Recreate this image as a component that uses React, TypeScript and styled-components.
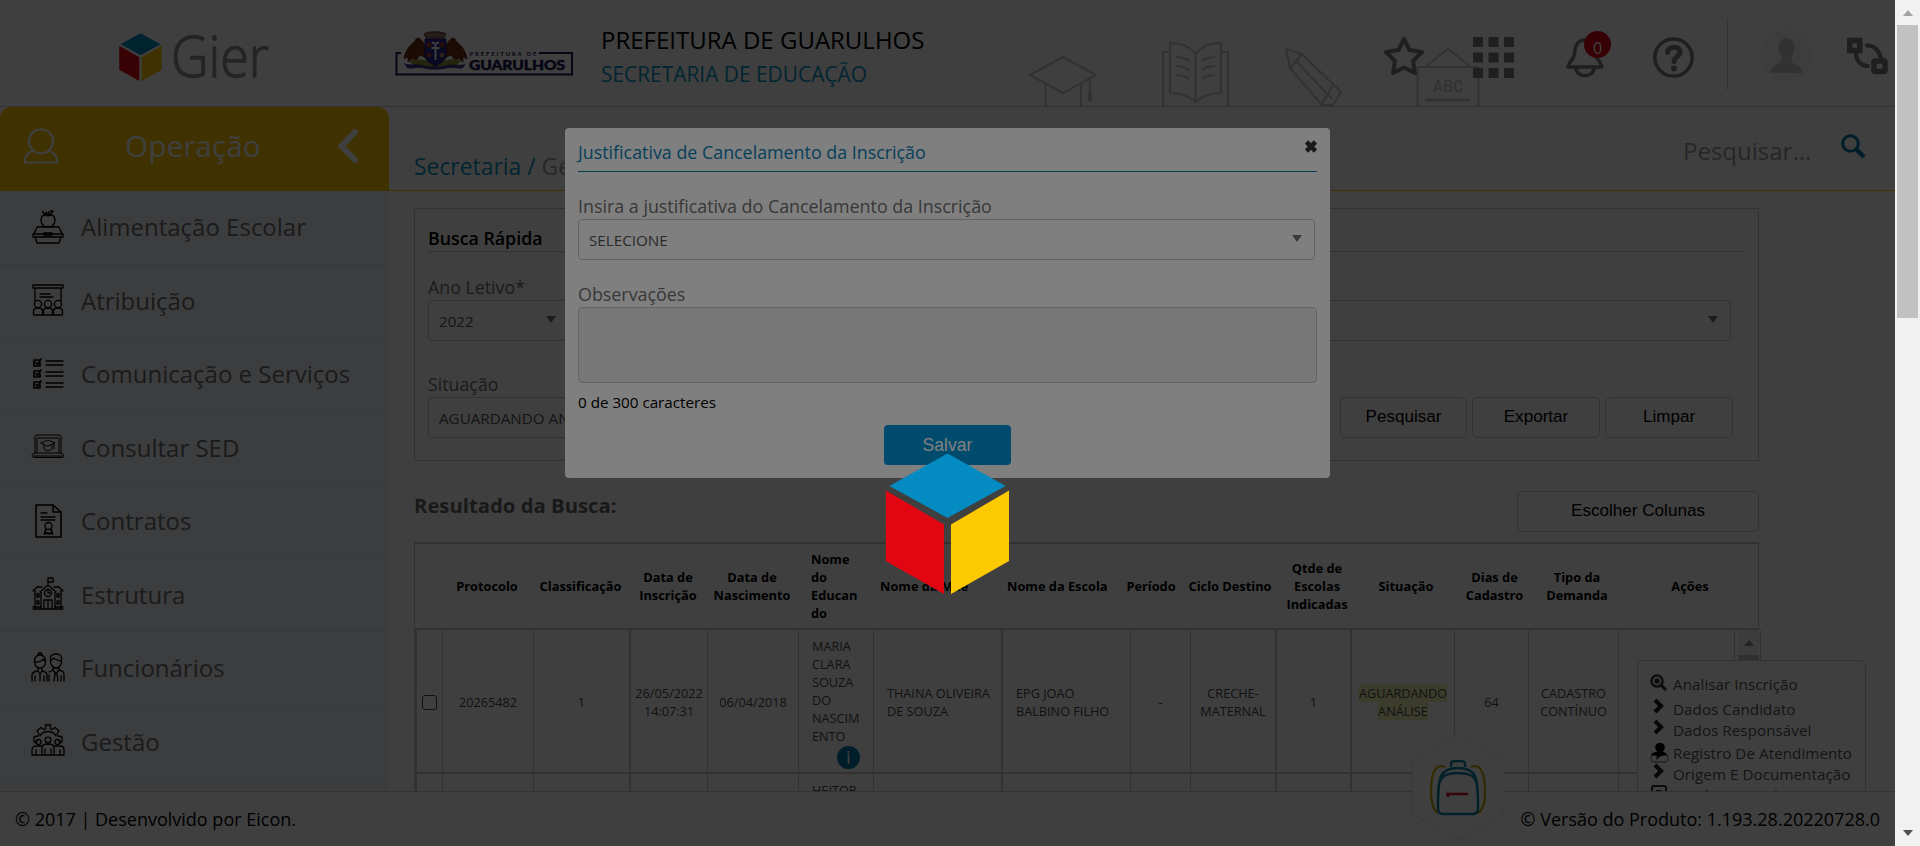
import React from 'react';
import styled, { createGlobalStyle, css } from 'styled-components';

const GlobalStyle = createGlobalStyle`
  * { box-sizing: border-box; }
  html, body { margin: 0; padding: 0; overflow: hidden; background: #fff; }
  body { font-family: "Open Sans", "Noto Sans", sans-serif; color: #000; }
  svg { display: block; flex: none; }
`;

const LINE = '#c8c8c8';
const BLUE = '#0a94c8';
const YELLOW = '#fdc900';

const Screen = styled.div`
  display: flex;
  width: 1920px;
  height: 846px;
  overflow: hidden;
`;

const Page = styled.div`
  position: relative;
  display: flex;
  flex-direction: column;
  width: 1895px;
  height: 846px;
  background: #fff;
`;

/* ---------- header ---------- */

const Header = styled.header`
  position: relative;
  display: flex;
  align-items: flex-start;
  height: 107px;
  padding: 0 7px 0 119px;
  border-bottom: 1px solid ${LINE};
`;

const Brand = styled.div`
  display: flex;
  margin-top: 20px;
  width: 276px;
  svg:first-child { margin-top: 13px; }
`;

const CityLogo = styled.div`
  margin-top: 29px;
  width: 206px;
`;

const Heading = styled.div`
  margin-top: 23px;
  line-height: 34px;
  white-space: nowrap;
`;

const CityName = styled.div`
  font-size: 24px;
`;

const Department = styled.div`
  font-size: 20.9px;
  color: ${BLUE};
`;

const Doodles = styled.svg`
  position: absolute;
  left: 1020px;
  bottom: 0;
`;

const Tools = styled.div`
  position: relative;
  display: flex;
  align-items: center;
  margin-left: auto;
  margin-top: 18px;
  height: 78px;
`;

const Tool = styled.div<{ $gap: number; $up?: number }>`
  position: relative;
  margin-left: ${(p) => p.$gap}px;
  padding-bottom: ${(p) => p.$up ?? 0}px;
`;

const Badge = styled.div`
  position: absolute;
  left: 18px;
  top: -6px;
  width: 27px;
  height: 27px;
  border-radius: 50%;
  background: #d80010;
  color: #fff;
  font-size: 16px;
  line-height: 34px;
  text-align: center;
`;

const Divider = styled.div`
  width: 1px;
  height: 72px;
  margin: 0 0 6px 33px;
  background: ${LINE};
`;

/* ---------- sub bar ---------- */

const SubBar = styled.div`
  display: flex;
  height: 84px;
`;

const ModuleTab = styled.div`
  display: flex;
  align-items: flex-start;
  width: 389px;
  padding: 21px 30px 0 23px;
  border-radius: 11px 11px 0 0;
  background: ${YELLOW};
`;

const ModuleName = styled.div`
  flex: 1;
  margin: 0 0 0 66px;
  font-size: 29.8px;
  line-height: 36px;
  color: #fff;
`;

const Crumbs = styled.div`
  display: flex;
  flex: 1;
  justify-content: space-between;
  padding: 26px 29px 0 25px;
  border-bottom: 1px solid ${YELLOW};
  font-size: 24px;
  line-height: 36px;
  white-space: nowrap;
`;

const Path = styled.div`
  margin-top: 16px;
  font-size: 22.9px;
  color: #a0a0a0;
  span { color: ${BLUE}; }
`;

const Search = styled.div`
  display: flex;
  width: 183px;
  justify-content: space-between;
  color: #999;
`;

/* ---------- main ---------- */

const Main = styled.div`
  display: flex;
  height: 600px;
  overflow: hidden;
`;

const Sidebar = styled.nav`
  width: 389px;
  background: #f2f5fa;
`;

const MenuItem = styled.div`
  display: flex;
  align-items: center;
  height: 73.5px;
  padding: 0 0 1px 31px;
  gap: 16px;
  border-bottom: 1px solid #e2e5ea;
  font-size: 24px;
  color: #6e6e6e;
  white-space: nowrap;
`;

const Content = styled.main`
  position: relative;
  flex: 1;
  padding: 17px 0 0 25px;
`;

const Panel = styled.section`
  width: 1345px;
  height: 253px;
  padding: 0 13px;
  border: 1px solid ${LINE};
`;

const PanelTitle = styled.h2`
  margin: 0 0 24px;
  height: 43px;
  padding-top: 17px;
  border-bottom: 1px solid ${LINE};
  font-size: 17.8px;
  font-weight: 600;
  line-height: 24px;
`;

const FieldRow = styled.div`
  display: flex;
  align-items: flex-end;
  margin-bottom: 32px;
  gap: 20px;
`;

const Field = styled.div<{ $w?: number }>`
  ${(p) => (p.$w ? css`width: ${p.$w}px;` : css`flex: 1; margin-right: 14px;`)}
`;

const Label = styled.label`
  display: block;
  padding-bottom: 2px;
  font-size: 17.8px;
  line-height: 22px;
  color: #707070;
`;

const SelectBox = styled.div`
  display: flex;
  align-items: center;
  justify-content: space-between;
  height: 41px;
  padding: 1px 12px 0 10px;
  border: 1px solid ${LINE};
  border-radius: 4px;
  background: #fff;
  font-size: 15.2px;
  color: #555;
  white-space: nowrap;
`;

const Arrow = styled.span`
  margin-top: -3px;
  border: 5px solid transparent;
  border-top: 7px solid #777;
  border-bottom: 0;
`;

const Button = styled.button<{ $w: number }>`
  width: ${(p) => p.$w}px;
  height: 41px;
  padding: 0 0 2px;
  border: 1px solid ${LINE};
  border-radius: 5px;
  background: #fff;
  color: #000;
  font-family: "Liberation Sans", sans-serif;
  font-size: 17.1px;
`;

const ButtonRow = styled.div`
  display: flex;
  gap: 5px;
  margin-left: auto;
  margin-right: 12px;
`;

const ResultBar = styled.div`
  display: flex;
  justify-content: space-between;
  width: 1345px;
  margin-top: 30px;
`;

const ResultTitle = styled.h2`
  margin: 0;
  font-size: 20.3px;
  line-height: 28px;
  color: #666;
`;

const TableHead = styled.div`
  display: grid;
  grid-template-columns: 27px 90px 97px 78px 90px 76px 128px 127px 46px 112px 62px 116px 61px 104px 122px;
  align-items: center;
  width: 1345px;
  height: 88px;
  margin-top: 10px;
  border: 1px solid ${LINE};
  border-width: 2px 1px;
  font-size: 12.8px;
  font-weight: 700;
  line-height: 18px;
`;

const HeadCell = styled.div<{ $pad?: number }>`
  display: flex;
  justify-content: ${(p) => (p.$pad ? 'flex-start' : 'center')};
  padding-left: ${(p) => p.$pad ?? 0}px;
  text-align: ${(p) => (p.$pad ? 'left' : 'center')};
  white-space: pre;
`;

const TableBody = styled.div`
  display: flex;
  width: 1347px;
  border: solid ${LINE};
  border-width: 0 1px 0 3px;
`;

const Rows = styled.div`
  width: 1318px;
`;

const Row = styled.div`
  display: grid;
  grid-template-columns: 26px 91px 97px 77px 91px 75px 129px 128px 60px 86px 75px 103px 74px 90px 116px;
  height: 144px;
  border-bottom: 2px solid ${LINE};
  font-size: 12.7px;
  line-height: 18px;
  color: #484848;
`;

const Cell = styled.div<{ $left?: boolean; $thick?: boolean }>`
  display: flex;
  align-items: center;
  justify-content: ${(p) => (p.$left ? 'flex-start' : 'center')};
  padding: 2px 0 0 ${(p) => (p.$left ? 13 : 0)}px;
  text-align: ${(p) => (p.$left ? 'left' : 'center')};
  border-right: ${(p) => (p.$thick ? 2 : 1)}px solid ${LINE};
  white-space: pre;
`;

const NameCell = styled(Cell)`
  flex-direction: column;
  align-items: flex-start;
  justify-content: flex-start;
  padding: 7px 0 0 13px;
`;

const Info = styled.span`
  width: 23px;
  height: 23px;
  margin: 1px 0 0 25px;
  border-radius: 50%;
  background: #0078a4;
  color: #fff;
  font-size: 19px;
  line-height: 22px;
  text-align: center;
`;

const Check = styled.span`
  width: 15px;
  height: 15px;
  border: 1px solid #444;
  border-radius: 3px;
`;

const Mark = styled.span`
  background: #f2f2b4;
`;

const MarkLines = styled.div`
  display: flex;
  flex-direction: column;
  align-items: center;
`;

const InnerScroll = styled.div`
  display: flex;
  flex-direction: column;
  align-items: center;
  width: 21px;
  margin-left: 3px;
  background: #f3f3f3;
`;

const InnerThumb = styled.div`
  width: 21px;
  height: 100px;
  margin-top: 9px;
  background: #c1c1c1;
`;

const ActionMenu = styled.div`
  position: absolute;
  left: 1248px;
  top: 469px;
  width: 229px;
  height: 200px;
  padding: 13px 0 0 12px;
  border: 1px solid ${LINE};
  border-radius: 6px;
  background: #fff;
`;

const ActionItem = styled.div<{ $h: number }>`
  display: flex;
  height: ${(p) => p.$h}px;
  font-size: 15.2px;
  line-height: 21px;
  letter-spacing: 0.05px;
  color: #555;
  white-space: nowrap;
`;

const ActionIcon = styled.span`
  width: 23px;
`;

const Footer = styled.footer`
  display: flex;
  justify-content: space-between;
  align-items: center;
  height: 55px;
  padding: 0 15px 1px;
  border-top: 1px solid ${LINE};
  background: #fff;
  font-size: 18px;
`;

const Bag = styled.svg`
  position: absolute;
  left: 1411px;
  top: 733px;
`;

/* ---------- overlays ---------- */

const Shade = styled.div`
  position: absolute;
  inset: 0;
  background: rgba(0, 0, 0, 0.5);
`;

const Modal = styled.div`
  width: 765px;
  height: 350px;
  margin: 128px 0 0 565px;
  padding: 0 13px;
  border-radius: 4px;
  background: #fff;
`;

const ModalHead = styled.div`
  display: flex;
  justify-content: space-between;
  height: 44px;
  padding-top: 12px;
  margin-bottom: 22px;
  border-bottom: 1px solid #0078a8;
  font-size: 17.85px;
  line-height: 24px;
  color: #0a80b4;
`;

const ModalField = styled.div<{ $right?: number }>`
  padding-right: ${(p) => p.$right ?? 0}px;
  margin-bottom: 22px;
`;

const ModalLabel = styled(Label)`
  padding: 0 0 1px;
  line-height: 24px;
  font-size: 17.87px;
`;

const TextArea = styled.div`
  height: 76px;
  border: 1px solid ${LINE};
  border-radius: 4px;
  background: #f0f0f0;
`;

const Counter = styled.div`
  margin-top: 8px;
  font-size: 15.2px;
  line-height: 22px;
`;

const SaveButton = styled.button`
  display: block;
  width: 127px;
  height: 40px;
  margin: -10px auto 0;
  padding: 0;
  border: 0;
  border-radius: 4px;
  background: #0096dc;
  color: #fff;
  font-family: "Liberation Sans", sans-serif;
  font-size: 17.6px;
`;

const Loader = styled(Shade)`
  display: flex;
  justify-content: center;
  padding-top: 453px;
`;

/* ---------- page scrollbar ---------- */

const Scroll = styled.div`
  display: flex;
  flex-direction: column;
  align-items: center;
  width: 25px;
  background: #f1f1f1;
`;

const Thumb = styled.div`
  width: 21px;
  height: 293px;
  margin: 9px 0 auto;
  background: #c1c1c1;
`;

const Tri = styled.span<{ $down?: boolean; $c: string }>`
  margin: ${(p) => (p.$down ? '0 0 10px' : '10px 0 0')};
  border: 5.5px solid transparent;
  ${(p) =>
    p.$down
      ? css`border-top: 6px solid ${p.$c}; border-bottom: 0;`
      : css`border-bottom: 6px solid ${p.$c}; border-top: 0;`}
`;

/* ---------- drawings ---------- */

const ink = { fill: 'none', stroke: '#000', strokeWidth: 1.3, strokeLinejoin: 'round' as const, strokeLinecap: 'round' as const };
const Ico = ({ children }: { children: React.ReactNode }) => (
  <svg width="34" height="34" viewBox="0 0 34 34" {...ink}>{children}</svg>
);

const FoodIcon = () => (
  <Ico>
    <path d="M17 6c-3-2-7-1-7 4 0 4 3 7 5 7 1 0 1-.6 2-.6s1 .6 2 .6c2 0 5-3 5-7 0-5-4-6-7-4zM17 6c0-2-1-3-2-4M17 4c1-3 4-3.500 5-3-.5 2-3 3.500-5 3zM15 4c-2 0-3-1-3.500-2.500" />
    <path d="M6 17h22l3 7H3zM2 24h30v3H2zM4 27l2 6h22l2-6M13 27v-4h8v4M15 27v-2h4v2" />
  </Ico>
);
const BoardIcon = () => (
  <Ico>
    <path d="M2 2h30v3H2zM4 5v13M30 5v13M9 11h10M9 14h13" />
    {[7, 17, 27].map((x) => (
      <g key={x}>
        <circle cx={x} cy="21" r="3.600" />
        <path d={`M${x - 4.5} 32v-4c0-2 2-3 4.500-3s4.500 1 4.500 3v4z`} />
      </g>
    ))}
  </Ico>
);
const ListIcon = () => (
  <Ico>
    {[3, 14, 25].map((y) => (
      <g key={y}>
        <path strokeWidth="1.700" d={`M9 ${y}H3v6h6v-3M5 ${y + 2.5}l1.500 2L10 ${y - 1}`} />
        <path d={`M15 ${y + 1}h17M15 ${y + 5}h17`} />
      </g>
    ))}
  </Ico>
);
const LaptopIcon = () => (
  <Ico>
    <path strokeWidth="1" d="M4 23V7c0-1 .5-2 2-2h22c1.500 0 2 1 2 2v16M6 23V8h22v15M3 23h28l2 3c0 1-1 1.500-2 1.500H3c-1 0-2-.5-2-1.500zM2 26h30M10 13l7-3 7 3-7 3zM13 15v4c2 2 6 2 8 0v-4M23 14v5" />
  </Ico>
);
const ContractIcon = () => (
  <Ico>
    <path strokeWidth="1.600" d="M5 1h17l8 7v25H5zM22 1v7h8" />
    <path d="M10 9h6M10 13h14M10 16h14" />
    <circle cx="17.500" cy="22" r="3.500" />
    <path strokeWidth="1.600" d="M15 25l-1.500 5 2.500-1 1.500 1 1.500-1 2.500 1-1.500-5" />
  </Ico>
);
const SchoolIcon = () => (
  <Ico>
    <path d="M2 32h30M4 32V14M30 32V14M2 14l4-4h5M32 14l-4-4h-5M9 15l8-7 8 7M10 14v18M24 14v18M17 8V1h5v4h-5M13 32v-9h8v9M17 23v9" />
    <circle cx="17" cy="16" r="3.500" />
    <path d="M17 14v2h2M6 17h2v3H6zM26 17h2v3h-2zM6 24h2v3H6zM26 24h2v3h-2zM2 30h8M24 30h8" />
  </Ico>
);
const StaffIcon = () => (
  <Ico>
    <path d="M3.500 11c0-5 2-7 5.500-7s5.500 2 5.500 7c0 4-3 6-5.500 6S3.500 15 3.500 11zM4 11c4 0 7-1 8-3 1 2 2 2 2.500 3M7 4c0-3 4-3 4 0M7 17v3l2 3 2-3v-3M1 30v-6c0-2 2-3.500 6-4M11 20c3 .5 5 2 5 4v6M4 30v-5M13 30v-5M9 23v7" />
    <path d="M19.500 10c0 4 2.500 7 5.500 7s5.500-3 5.500-7M19.500 10V7c0-3 3-4 6-4s5 2 5 4v3c-3-1-6-1-8-3-1 2-2 2-3 3M22 17v2l3 4 3-4v-2M18 21l4-2M28 19c4 1 5 2 5 5v6M18 30v-6M30 30v-5M24 23l-1 7M26 23l1 7" />
  </Ico>
);
const ManageIcon = () => (
  <Ico>
    <path d="M6 18H3v-5l4-1 1-2-2-3 4-3.500 3 2 1.500-.5V1h5v4l1.500.5 3-2L28 7l-2 3 1 2 4 1v5h-3M9 12c3-6 13-6 16 0" />
    <circle cx="17" cy="16" r="2.800" />
    <circle cx="7.500" cy="18" r="2.500" />
    <circle cx="26.500" cy="18" r="2.500" />
    <path d="M11 31v-7c0-3 2-4 6-4s6 1 6 4v7zM14 31v-6M20 31v-6M11 22H5c-2 0-4 1-4 4v5h10M23 22h6c2 0 4 1 4 4v5H23M5 31v-5M29 31v-5" />
  </Ico>
);

const Cube = ({ w, h }: { w: number; h: number }) => (
  <svg width={w} height={h} viewBox="0 0 126 141" preserveAspectRatio="none">
    <path fill="#048cc2" d="M63 .5L121.500 33 63 65 4.500 33z" />
    <path fill="#e20613" d="M.8 37.500L59.500 71.500V141L.8 108z" />
    <path fill="#fdc900" d="M125 37.500L66.500 71.500V141l58.500-33z" />
  </svg>
);

const CityCrest = () => (
  <svg width="180" height="48" viewBox="0 0 180 48">
    <path d="M6 24H1.500v21.500H177V24h-33" fill="none" stroke="#1a1450" strokeWidth="2" />
    <path d="M29 5c4-3 18-3 22 0l-2 4H31z" fill="#8a7068" stroke="#703028" />
    <path d="M31 18C28 15 28 10 23 9c-3 0-2 3-5 5-5 4-8 9-9 16l4-2v5l5-4 2 4 5-7 6 3z" fill="#6e2c10" stroke="#401808" strokeWidth=".6" />
    <path d="M50 18c3-3 3-8 8-9 3 0 2 3 5 5 5 4 8 9 9 16l-4-2v5l-5-4-2 4-5-7-6 3z" fill="#6e2c10" stroke="#401808" strokeWidth=".6" />
    <path d="M14 32c8-4 14 0 26 0s18-4 26 0l-8 7H22z" fill="#96903c" />
    <path d="M30 10h21v16c0 6-6 8-10.500 11C36 34 30 32 30 26z" fill="#28248c" stroke="#181468" />
    <circle cx="34" cy="16" r="2.500" fill="#a03c28" />
    <circle cx="47" cy="16" r="2.500" fill="#a03c28" />
    <circle cx="34" cy="26" r="2.500" fill="#a03c28" />
    <circle cx="47" cy="26" r="2.500" fill="#b08068" />
    <path d="M40.500 14v17M36.500 19h8M37 13c2 2 5 2 7 0" stroke="#fff" strokeWidth="2" fill="none" />
    <path d="M9 34c6 3 12 0 18 2s20 2 26 0 14 2 18-2l-3 5c-6 2-10-2-16 0s-18 2-24 0-10 2-16 0z" fill="#383488" />
    <text x="74.500" y="27" fontSize="6" fill="#1a1450" textLength="67" fontFamily="Lato" fontWeight="700">PREFEITURA DE</text>
    <text x="74" y="40.500" fontSize="13.500" fill="#1a1450" stroke="#1a1450" strokeWidth=".5" textLength="96" lengthAdjust="spacingAndGlyphs" fontFamily="Lato" fontWeight="900">GUARULHOS</text>
  </svg>
);

const HeaderDoodles = () => (
  <Doodles width="470" height="66" viewBox="0 0 470 66" fill="none" stroke={LINE} strokeWidth="2.200" strokeLinejoin="round">
    <path d="M10 35L43 17l33 18-33 18zM25.500 44v22M61 44v22M70 39v22" />
    <path d="M69 53.500h2v7h-2z" />
    <path d="M150 48V3c14 0 21 5 25.500 11C180 8 187 3 201 3v50c-14 0-21 5-25.500 9C171 58 164 53 150 53V48M175.500 14v48M150 12h-7v54M201 12h7v54M156 17c5 0 9 1 13 4M156 26c5 0 9 1 13 4M156 35c5 0 9 1 13 4M195 17c-5 0-9 1-13 4M195 26c-5 0-9 1-13 4M195 35c-5 0-9 1-13 4" />
    <path d="M266 9l16 5 39 38-8 13h-11l-32-37zM270 28l12-14M277 22l35 37M302 64l11-19" />
    <path d="M397.500 66V27h61v39M406 26l22-17 22 17" />
    <path strokeWidth="3" d="M405 60h45" />
    <text x="413" y="51.500" fontSize="17" fontWeight="500" fill={LINE} stroke="none" textLength="30" lengthAdjust="spacingAndGlyphs" fontFamily="Roboto">ABC</text>
  </Doodles>
);

const GRAY = '#7c7c7c';

const StarIcon = () => (
  <svg width="42" height="40" viewBox="0 0 42 40" fill="none" stroke={GRAY} strokeWidth="4" strokeLinejoin="round">
    <path d="M21 3l5.500 11 12.500 2-9 9 2 12-11-5.500L10 37l2-12-9-9 12.500-2z" />
  </svg>
);
const GridIcon = () => (
  <svg width="41" height="41" viewBox="0 0 41 41" fill={GRAY}>
    {[0, 15.5, 31].map((y) => [0, 15.5, 31].map((x) => <rect key={`${x}-${y}`} x={x} y={y} width="10" height="10" />))}
  </svg>
);
const BellIcon = () => (
  <svg width="38" height="41" viewBox="0 0 38 41" fill="none" stroke={GRAY} strokeWidth="3.600" strokeLinejoin="round">
    <path d="M19 3C10 3 9 11 8.500 17 8 23 3 24 2 30h34c-1-6-6-7-6.500-13C29 11 28 3 19 3zM10 31c0 10 18 10 18 0" />
  </svg>
);
const HelpIcon = () => (
  <svg width="41" height="41" viewBox="0 0 41 41" fill="none" stroke={GRAY}>
    <circle cx="20.500" cy="20.500" r="18.600" strokeWidth="3.500" />
    <path strokeWidth="5" strokeLinecap="round" d="M14.500 15.500c0-7 13-7 12.500 0 0 4-6 4-6 9" />
    <circle cx="21" cy="31.500" r="1.500" strokeWidth="3" />
  </svg>
);
const AvatarIcon = () => (
  <svg width="53" height="53" viewBox="0 0 53 53">
    <circle cx="26.500" cy="26.500" r="26" fill="#f6f6f6" />
    <path fill="#c8c8c8" d="M26.500 9c5 0 8 4 8 9s-2 8-3 10v4c2 4 10 4 11 12h-32c1-8 9-8 11-12v-4c-1-2-3-5-3-10s3-9 8-9z" />
  </svg>
);
const SwapIcon = () => (
  <svg width="41" height="38" viewBox="0 0 41 38" fill="none" stroke={GRAY} strokeWidth="5.500">
    <rect x="2.800" y="3.500" width="10" height="10" />
    <rect x="27" y="24" width="11" height="10.500" rx="1" />
    <path strokeWidth="4.200" strokeLinecap="round" d="M20 8.500c8 0 13 6 14 14M9 16c0 8 5 13 12 13" />
  </svg>
);

const GlassSvg = styled.svg`
  margin-top: 1px;
`;
const Glass = () => (
  <GlassSvg width="25" height="25" viewBox="0 0 25 25" fill="none" stroke="#0078a4">
    <circle cx="9.500" cy="9.500" r="7.800" strokeWidth="3" />
    <path strokeWidth="4.500" d="M15 15l8 8" />
  </GlassSvg>
);

const Chevron = () => (
  <svg width="16" height="15" viewBox="0 0 16 15" fill="none" stroke="#222" strokeWidth="4.200">
    <path d="M5 1l6 6-6 6" />
  </svg>
);
const ZoomPlus = () => (
  <svg width="17" height="17" viewBox="0 0 17 17" fill="none" stroke="#333" strokeWidth="2.400">
    <circle cx="7" cy="7" r="5.600" />
    <path strokeWidth="3" d="M11 11l5 5" />
    <circle cx="7" cy="7" r="1.500" />
  </svg>
);
const PersonStamp = () => (
  <svg width="19" height="20" viewBox="0 0 19 20">
    <path d="M2 12h15c3 8-1 7-7.500 7S-1 20 2 12z" fill="#fff" stroke="#555" />
    <circle cx="10" cy="4.500" r="4.800" />
    <path d="M1 12c1-3 6-3 9-5 3 2 6 2 7 5l-6 1-5 4 1-4z" />
  </svg>
);
const PageIcon = () => (
  <svg width="17" height="17" viewBox="0 0 17 17" fill="none" stroke="#333" strokeWidth="2">
    <rect x="2" y="1" width="14" height="15" rx="2" />
    <path d="M6 6h6" />
  </svg>
);

const menu = [
  { label: 'Alimentação Escolar', Icon: FoodIcon },
  { label: 'Atribuição', Icon: BoardIcon },
  { label: 'Comunicação e Serviços', Icon: ListIcon },
  { label: 'Consultar SED', Icon: LaptopIcon },
  { label: 'Contratos', Icon: ContractIcon },
  { label: 'Estrutura', Icon: SchoolIcon },
  { label: 'Funcionários', Icon: StaffIcon },
  { label: 'Gestão', Icon: ManageIcon },
];

const heads: { t: string; pad?: number }[] = [
  { t: '' },
  { t: 'Protocolo' },
  { t: 'Classificação' },
  { t: 'Data de\nInscrição' },
  { t: 'Data de\nNascimento' },
  { t: 'Nome\ndo\nEducan\ndo', pad: 14 },
  { t: 'Nome da Mãe', pad: 7 },
  { t: 'Nome da Escola', pad: 6 },
  { t: 'Período' },
  { t: 'Ciclo Destino' },
  { t: 'Qtde de\nEscolas\nIndicadas' },
  { t: 'Situação' },
  { t: 'Dias de\nCadastro' },
  { t: 'Tipo da\nDemanda' },
  { t: 'Ações' },
];

const actions = [
  { t: 'Analisar Inscrição', Icon: ZoomPlus, h: 25 },
  { t: 'Dados Candidato', Icon: Chevron, h: 21 },
  { t: 'Dados Responsável', Icon: Chevron, h: 23 },
  { t: 'Registro De Atendimento', Icon: PersonStamp, h: 21 },
  { t: 'Origem E Documentação', Icon: Chevron, h: 21 },
  { t: 'Histórico De Alteração', Icon: PageIcon, h: 22 },
];

export default function App() {
  return (
    <>
      <GlobalStyle />
      <Screen>
        <Page>
          <Header>
            <HeaderDoodles />
            <Brand>
              <Cube w={43} h={48} />
              <svg width="120" height="84" viewBox="0 0 120 84">
                <text x="9" y="57" fontFamily="Open Sans" fontWeight="300" fontSize="57" fill="#909090" stroke="#909090" strokeWidth="1.300" textLength="98" lengthAdjust="spacingAndGlyphs">Gier</text>
              </svg>
            </Brand>
            <CityLogo><CityCrest /></CityLogo>
            <Heading>
              <CityName>PREFEITURA DE GUARULHOS</CityName>
              <Department>SECRETARIA DE EDUCAÇÃO</Department>
            </Heading>
            <Tools>
              <Tool $gap={0} $up={2}><StarIcon /></Tool>
              <Tool $gap={48}><GridIcon /></Tool>
              <Tool $gap={52}><BellIcon /><Badge>0</Badge></Tool>
              <Tool $gap={49}><HelpIcon /></Tool>
              <Divider />
              <Tool $gap={32} $up={4}><AvatarIcon /></Tool>
              <Tool $gap={34} $up={2}><SwapIcon /></Tool>
            </Tools>
          </Header>

          <SubBar>
            <ModuleTab>
              <svg width="36" height="36" viewBox="0 0 36 36" fill="none" stroke="#fff" strokeWidth="2.200">
                <path d="M18 1.500c7 0 12 5 12 12 0 6-5 12-12 12s-12-6-12-12c0-7 5-12 12-12zM10 23c-5 1-8 5-8.500 11.500h33C34 28 31 24 26 23" />
              </svg>
              <ModuleName>Operação</ModuleName>
              <svg width="22" height="36" viewBox="0 0 22 36" fill="none" stroke="#fff" strokeWidth="6" strokeLinecap="round">
                <path d="M18 4L4.500 18 18 32" />
              </svg>
            </ModuleTab>
            <Crumbs>
              <Path><span>Secretaria /</span> Ge</Path>
              <Search>Pesquisar...<Glass /></Search>
            </Crumbs>
          </SubBar>

          <Main>
            <Sidebar>
              {menu.map(({ label, Icon }) => (
                <MenuItem key={label}><Icon />{label}</MenuItem>
              ))}
            </Sidebar>
            <Content>
              <Panel>
                <PanelTitle>Busca Rápida</PanelTitle>
                <FieldRow>
                  <Field $w={141}>
                    <Label>Ano Letivo*</Label>
                    <SelectBox>2022<Arrow /></SelectBox>
                  </Field>
                  <Field>
                    <SelectBox><span /><Arrow /></SelectBox>
                  </Field>
                </FieldRow>
                <FieldRow>
                  <Field $w={300}>
                    <Label>Situação</Label>
                    <SelectBox>AGUARDANDO ANÁLISE<Arrow /></SelectBox>
                  </Field>
                  <ButtonRow>
                    <Button $w={127}>Pesquisar</Button>
                    <Button $w={128}>Exportar</Button>
                    <Button $w={128}>Limpar</Button>
                  </ButtonRow>
                </FieldRow>
              </Panel>
              <ResultBar>
                <ResultTitle>Resultado da Busca:</ResultTitle>
                <Button $w={242}>Escolher Colunas</Button>
              </ResultBar>
              <TableHead>
                {heads.map((h, i) => <HeadCell key={i} $pad={h.pad}>{h.t}</HeadCell>)}
              </TableHead>
              <TableBody>
                <Rows>
                  <Row>
                    <Cell><Check /></Cell>
                    <Cell>20265482</Cell>
                    <Cell $thick>1</Cell>
                    <Cell>{'26/05/2022\n14:07:31'}</Cell>
                    <Cell>06/04/2018</Cell>
                    <NameCell $left>{'MARIA\nCLARA\nSOUZA\nDO\nNASCIM\nENTO'}<Info>i</Info></NameCell>
                    <Cell $left $thick>{'THAINA OLIVEIRA\nDE SOUZA'}</Cell>
                    <Cell $left>{'EPG JOAO\nBALBINO FILHO'}</Cell>
                    <Cell>-</Cell>
                    <Cell $thick>{'CRECHE-\nMATERNAL'}</Cell>
                    <Cell $thick>1</Cell>
                    <Cell><MarkLines><Mark>AGUARDANDO</Mark><Mark>ANÁLISE</Mark></MarkLines></Cell>
                    <Cell>64</Cell>
                    <Cell>{'CADASTRO\nCONTÍNUO'}</Cell>
                    <Cell />
                  </Row>
                  <Row>
                    <Cell /><Cell /><Cell $thick /><Cell /><Cell />
                    <NameCell $left>HEITOR</NameCell>
                    <Cell $thick /><Cell /><Cell /><Cell $thick /><Cell $thick /><Cell /><Cell /><Cell /><Cell />
                  </Row>
                </Rows>
                <InnerScroll>
                  <Tri $c="#888" />
                  <InnerThumb />
                </InnerScroll>
              </TableBody>
              <ActionMenu>
                {actions.map(({ t, Icon, h }) => (
                  <ActionItem key={t} $h={h}><ActionIcon><Icon /></ActionIcon>{t}</ActionItem>
                ))}
              </ActionMenu>
            </Content>
          </Main>

          <Footer>
            <span>© 2017 | Desenvolvido por Eicon.</span>
            <span>© Versão do Produto: 1.193.28.20220728.0</span>
          </Footer>

          <Bag width="94" height="108" viewBox="0 0 94 108" fill="none" strokeLinejoin="round">
            <path d="M47 1.500L93 27v54L47 106.500 1 81V27z" fill="#fff" stroke="#e4e4e4" />
            <path d="M34 34c-12-5-14 12-14 25 0 10 2 18 7 21M60 34c12-5 14 12 14 25 0 10-2 18-7 21" stroke="#c8a800" strokeWidth="2.200" />
            <path d="M32 81c-4 0-5-3-5-6 0-14 0-24 3-32 3-6 8-8 17-8s14 2 17 8c3 8 3 18 3 32 0 3-1 6-5 6zM29 49c2-7 8-9 18-9s16 2 18 9M40 34v-3c0-3 2-3 7-3s7 0 7 3v3" stroke="#0a80a8" strokeWidth="2.400" />
            <path d="M35 61h22M37 61v3" stroke="#d01020" strokeWidth="2.600" />
          </Bag>

          <Shade>
            <Modal>
              <ModalHead>
                Justificativa de Cancelamento da Inscrição
                <svg width="12" height="13" viewBox="0 0 12 13" stroke="#333" strokeWidth="4.600">
                  <path d="M1.500 2l9 9M10.500 2l-9 9" />
                </svg>
              </ModalHead>
              <ModalField $right={2}>
                <ModalLabel>Insira a justificativa do Cancelamento da Inscrição</ModalLabel>
                <SelectBox>SELECIONE<Arrow /></SelectBox>
              </ModalField>
              <ModalField>
                <ModalLabel>Observações</ModalLabel>
                <TextArea />
                <Counter>0 de 300 caracteres</Counter>
              </ModalField>
              <SaveButton>Salvar</SaveButton>
            </Modal>
          </Shade>
          <Loader>
            <Cube w={125} h={141} />
          </Loader>
        </Page>
        <Scroll>
          <Tri $c="#a3a3a3" />
          <Thumb />
          <Tri $down $c="#505050" />
        </Scroll>
      </Screen>
    </>
  );
}
